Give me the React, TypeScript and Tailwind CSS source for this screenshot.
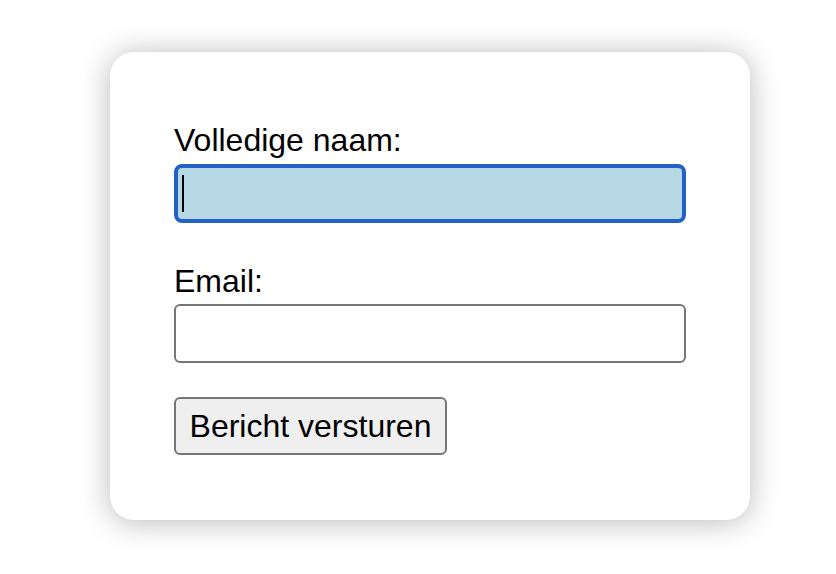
import React from 'react';

export default function App() {
  return (
    <div className="min-h-[574px] w-[836px] bg-white pl-[110px] pt-[52px] font-['Liberation_Sans',Arial,sans-serif] text-black">
      {/* === Card === */}
      <form
        className="flex w-[640px] flex-col rounded-[24px] bg-white px-[64px] pt-[70px] pb-[65px] shadow-[0_2px_30px_rgba(0,0,0,0.28)]"
        onSubmit={(e) => e.preventDefault()}
      >
        <label htmlFor="naam" className="block text-[32px] leading-[37px]">
          Volledige naam:
        </label>
        <div className="relative mt-[5px]">
          <input
            id="naam"
            type="text"
            readOnly
            className="block h-[59px] w-[512px] rounded-[8px] border-[4px] border-[#2560c9] bg-[#b5d8e4] px-[6px] text-[32px] caret-transparent outline-none"
          />
          {/* caret */}
          <span className="absolute left-[8px] top-[11px] h-[37px] w-[2px] bg-black" />
        </div>

        <label htmlFor="email" className="mt-[40px] block text-[32px] leading-[37px]">
          Email:
        </label>
        <input
          id="email"
          type="email"
          className="mt-[4px] block h-[59px] w-[512px] rounded-[6px] border-2 border-[#767676] bg-white px-[6px] text-[32px] outline-none"
        />

        <div className="mt-[34px]">
          <button
            type="submit"
            className="flex h-[58px] w-[273px] items-center justify-center rounded-[6px] border-2 border-[#767676] bg-[#efefef] text-[32px] leading-none text-black"
          >
            Bericht versturen
          </button>
        </div>
      </form>
    </div>
  );
}
